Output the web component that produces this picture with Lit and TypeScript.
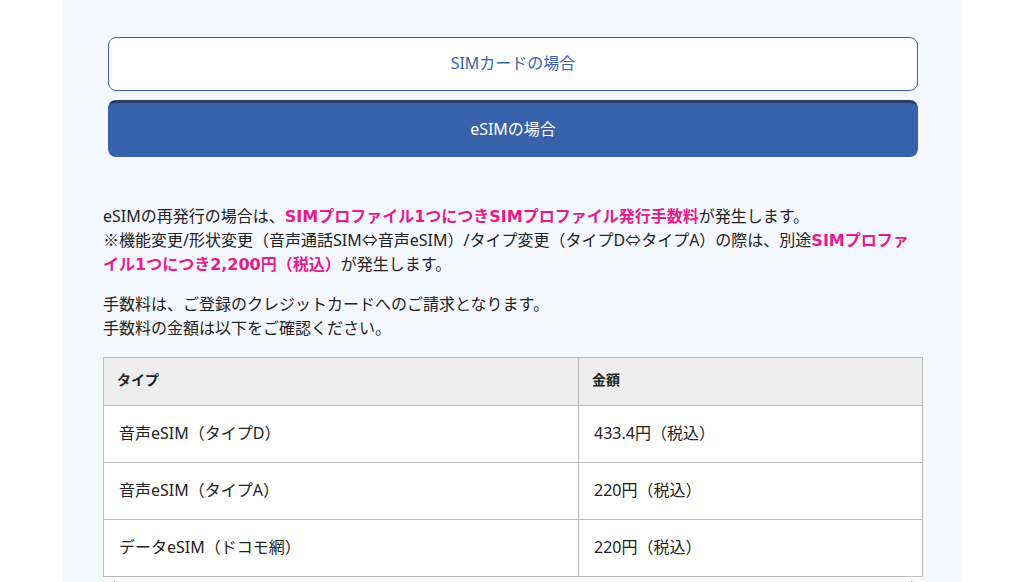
import { LitElement, html, css } from "lit";
import { customElement, state } from "lit/decorators.js";

const fees = [
  ["音声eSIM（タイプD）", "433.4円（税込）"],
  ["音声eSIM（タイプA）", "220円（税込）"],
  ["データeSIM（ドコモ網）", "220円（税込）"],
];

@customElement("app-root")
export class AppRoot extends LitElement {
  @state() private selected = 1;

  static styles = css`
    :host {
      display: block;
      box-sizing: border-box;
      height: 100vh;
      padding-right: 3px;
      overflow: hidden;
      background: #fff;
      color: #222;
      font: 16px/24px "Noto Sans", "Noto Sans CJK JP", sans-serif;
    }
    * { box-sizing: border-box; }
    .panel {
      max-width: 900px;
      min-height: 100%;
      margin: 0 auto;
      padding: 37px 40px 0;
      background: #f5f8ff;
    }
    .tabs {
      display: flex;
      flex-direction: column;
      gap: 9px;
      padding: 0 5px;
    }
    .tab {
      padding: 13px 16px 15px;
      border: 1px solid #3862ab;
      border-radius: 8px;
      background: #fff;
      color: #3862ab;
      font: inherit;
    }
    .tab.active {
      padding-top: 14px;
      border-top: 3px solid #243d6b;
      background: #3862ab;
      color: #fff;
    }
    .body { padding-top: 47px; }
    p { margin: 0 0 16px; }
    strong {
      color: #e71b8c;
      font-family: "DejaVu Sans", "Noto Sans CJK JP", sans-serif;
      font-weight: 700;
      line-height: 16px;
    }
    .symbol {
      font-family: "Noto Sans CJK JP", sans-serif;
      line-height: 16px;
    }
    .table-area { padding-top: 1px; }
    table {
      width: 100%;
      border-collapse: collapse;
      table-layout: fixed;
      background: #fff;
    }
    .type { width: 58%; }
    th, td { border: 1px solid #bbb; text-align: left; }
    th {
      padding: 10px 13px 13px;
      background: #eee;
      font-size: 14px;
    }
    td { padding: 15px 15px 17px; }
    .scroll-track {
      display: flex;
      justify-content: space-between;
      height: 17px;
      padding: 0 5px;
      background: #fafafa;
    }
    .scroll-track svg { width: 8px; height: 17px; fill: #8b8b8b; }
  `;

  private tab(label: string, index: number) {
    return html`<button
      class="tab ${this.selected === index ? "active" : ""}"
      role="tab"
      aria-selected=${this.selected === index}
      @click=${() => (this.selected = index)}
    >${label}</button>`;
  }

  render() {
    return html`
      <main class="panel">
        <div class="tabs" role="tablist">
          ${this.tab("SIMカードの場合", 0)}${this.tab("eSIMの場合", 1)}
        </div>
        <section class="body">
          <p>eSIMの再発行の場合は、<strong>SIMプロファイル1つにつきSIMプロファイル発行手数料</strong>が発生します。<br /><span class="symbol">※</span>機能変更/形状変更（音声通話SIM<span class="symbol">⇔</span>音声eSIM）/タイプ変更（タイプD<span class="symbol">⇔</span>タイプA）の際は、別途<strong>SIMプロファイル1つにつき2,200円（税込）</strong>が発生します。</p>
          <p>手数料は、ご登録のクレジットカードへのご請求となります。<br />手数料の金額は以下をご確認ください。</p>
          <div class="table-area">
            <table>
              <thead><tr><th class="type" scope="col">タイプ</th><th scope="col">金額</th></tr></thead>
              <tbody>${fees.map(([t, f]) => html`<tr><td>${t}</td><td>${f}</td></tr>`)}</tbody>
            </table>
            <div class="scroll-track" aria-hidden="true">
              <svg viewBox="0 0 8 17"><path d="M7 4v9L1 9V8z" /></svg>
              <svg viewBox="0 0 8 17"><path d="M1 4v9l6-4V8z" /></svg>
            </div>
          </div>
        </section>
      </main>
    `;
  }
}
